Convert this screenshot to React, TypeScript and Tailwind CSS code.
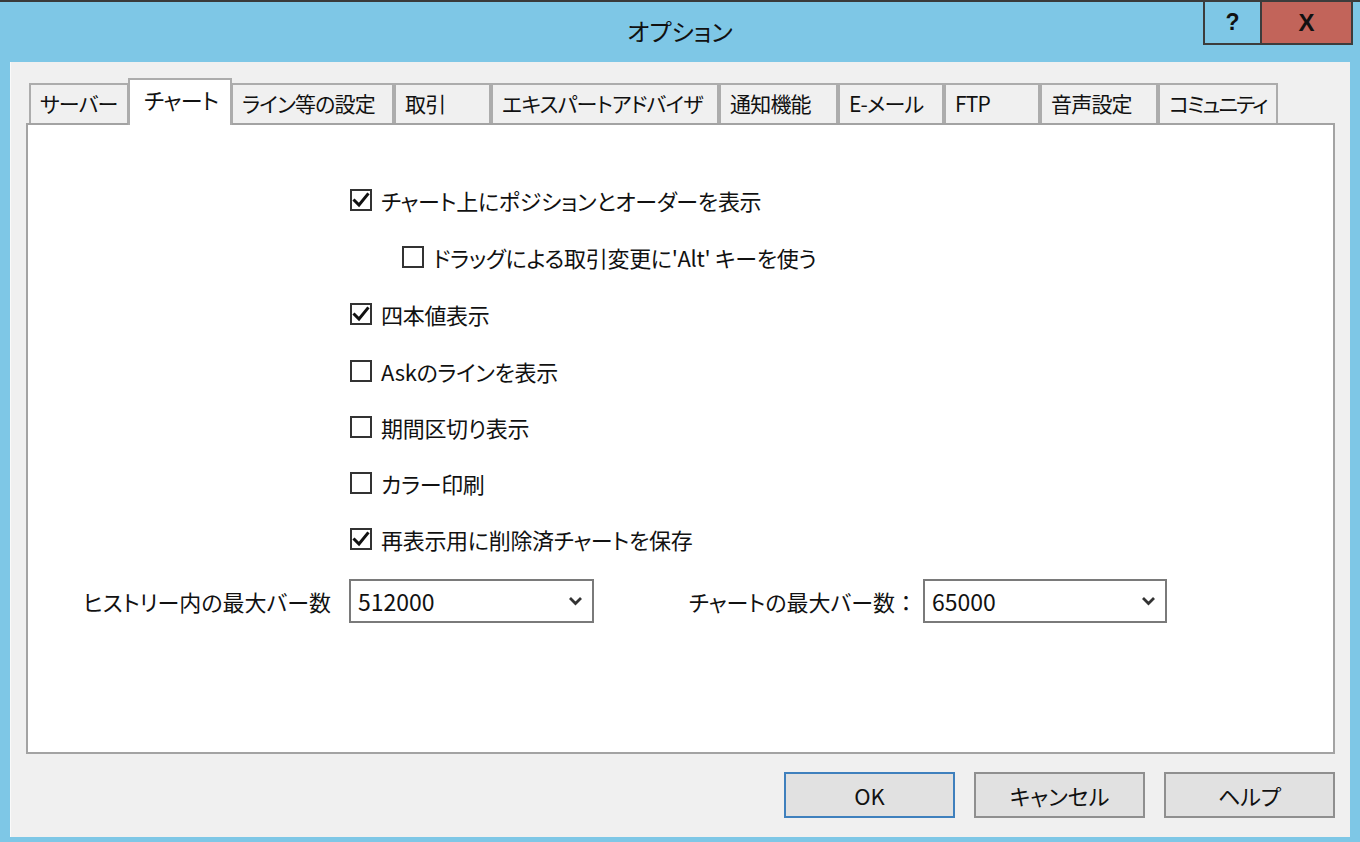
import React from "react";

const FONT = "font-['Noto_Sans_CJK_JP','Noto_Sans',sans-serif] [font-feature-settings:'palt']";

const tabs: { label: string; w: string; selected?: boolean; tr?: string }[] = [
  { label: "サーバー", w: "w-[100px]" },
  { label: "チャート", w: "w-[104px]", selected: true },
  { label: "ライン等の設定", w: "w-[163px]" },
  { label: "取引", w: "w-[97px]" },
  { label: "エキスパートアドバイザ", w: "w-[228px]" },
  { label: "通知機能", w: "w-[119px]" },
  { label: "E-メール", w: "w-[106px]" },
  { label: "FTP", w: "w-[96px]" },
  { label: "音声設定", w: "w-[118px]" },
  { label: "コミュニティ", w: "w-[120px]", tr: "tracking-[-1.8px]" },
];

function Check({ checked }: { checked: boolean }) {
  return (
    <div className="w-[22px] h-[22px] border-2 border-[#333333] bg-white flex items-center justify-center shrink-0">
      {checked && (
        <svg width="18" height="18" viewBox="0 0 18 18">
          <path d="M2.5 9.5 L7 14 L15.5 3.5" fill="none" stroke="#111" strokeWidth="3" strokeLinecap="square" />
        </svg>
      )}
    </div>
  );
}

function Row({ h, checked, label, indent }: { h: string; checked: boolean; label: string; indent?: boolean }) {
  return (
    <div className={`${h} flex items-center`}>
      <div className={`flex items-center gap-[9px] ${indent ? "ml-[374px]" : "ml-[322px]"}`}>
        <Check checked={checked} />
        <span className="text-[22px] text-[#111] leading-none whitespace-nowrap tracking-[-0.3px]">{label}</span>
      </div>
    </div>
  );
}

function Chevron() {
  return (
    <svg width="15" height="10" viewBox="0 0 15 10">
      <path d="M2 2 L7.5 7.5 L13 2" fill="none" stroke="#333" strokeWidth="2.8" />
    </svg>
  );
}

function Combo({ w, value }: { w: string; value: string }) {
  return (
    <div className={`${w} h-[44px] border-2 border-[#7a7a7a] bg-white flex items-center justify-between pl-[7px] pr-[9px]`}>
      <span className="text-[23px] text-[#111] leading-none">{value}</span>
      <Chevron />
    </div>
  );
}

export default function App() {
  return (
    <div className={`w-[1360px] h-[842px] bg-[#7ec7e6] flex flex-col overflow-hidden ${FONT}`}>
      <div className="h-[2px] bg-[#3a3a3a]" />
      <div className="h-[60px] relative flex items-center justify-center">
        <span className="text-[24px] text-[#111] mt-[-2px]">オプション</span>
        <div className="absolute top-[-2px] right-[7px] flex h-[45px]">
          <div className="w-[57px] border-2 border-r-0 border-[#3c3c3c] bg-[#7ec7e6] flex items-center justify-center">
            <span className="text-[23px] font-bold text-[#111] font-['Liberation_Sans',sans-serif]">?</span>
          </div>
          <div className="w-[93px] border-2 border-[#3c3c3c] bg-[#c2645a] flex items-center justify-center">
            <span className="text-[24px] font-bold text-[#111] font-['Liberation_Sans',sans-serif]">X</span>
          </div>
        </div>
      </div>
      <div className="mx-[10px] h-[775px] bg-[#f0f0f0] border-l border-[#fafafa] px-[15px] pt-[16px] flex flex-col">
        <div className="h-[45px] flex items-end ml-[3px] relative z-10">
          {tabs.map((t) =>
            t.selected ? (
              <div
                key={t.label}
                className={`${t.w} h-[47px] -mb-[2px] -mx-[1px] bg-white border-2 border-b-0 border-[#acacac] flex items-center pl-[14px] pb-[8px] shrink-0`}
              >
                <span className="text-[22px] text-[#111] leading-none whitespace-nowrap tracking-[-0.5px]">{t.label}</span>
              </div>
            ) : (
              <div
                key={t.label}
                className={`${t.w} h-[40px] bg-[#f0f0f0] border-2 border-b-0 border-[#acacac] flex items-center pl-[9px] pb-[2px] shrink-0 overflow-hidden`}
              >
                <span className={`text-[21px] text-[#111] leading-none whitespace-nowrap ${t.tr ?? "tracking-[-0.8px]"}`}>{t.label}</span>
              </div>
            )
          )}
        </div>
        <div className="h-[631px] border-2 border-[#a3a3a3] bg-white pt-[47px] flex flex-col">
          <Row h="h-[56px]" checked label="チャート上にポジションとオーダーを表示" />
          <Row h="h-[57px]" checked={false} indent label="ドラッグによる取引変更に'Alt' キーを使う" />
          <Row h="h-[57px]" checked label="四本値表示" />
          <Row h="h-[57px]" checked={false} label="Askのラインを表示" />
          <Row h="h-[56px]" checked={false} label="期間区切り表示" />
          <Row h="h-[56px]" checked={false} label="カラー印刷" />
          <Row h="h-[56px]" checked label="再表示用に削除済チャートを保存" />
          <div className="mt-[12px] flex items-center">
            <div className="w-[321px] pr-[18px] flex justify-end">
              <span className="text-[22px] text-[#111] leading-none whitespace-nowrap">ヒストリー内の最大バー数</span>
            </div>
            <Combo w="w-[245px]" value="512000" />
            <div className="w-[329px] pr-[6px] flex justify-end">
              <span className="text-[22px] text-[#111] leading-none whitespace-nowrap">
                チャートの最大バー数<span className="[font-feature-settings:normal]">：</span>
              </span>
            </div>
            <Combo w="w-[244px]" value="65000" />
          </div>
        </div>
        <div className="mt-[18px] flex justify-end gap-[19px]">
          <div className="w-[171px] h-[46px] border-2 border-[#3f80bd] bg-[#e1e1e1] flex items-center justify-center">
            <span className="text-[22px] text-[#111] leading-none">OK</span>
          </div>
          <div className="w-[171px] h-[46px] border-2 border-[#8f8f8f] bg-[#e1e1e1] flex items-center justify-center">
            <span className="text-[22px] text-[#111] leading-none">キャンセル</span>
          </div>
          <div className="w-[171px] h-[46px] border-2 border-[#8f8f8f] bg-[#e1e1e1] flex items-center justify-center">
            <span className="text-[22px] text-[#111] leading-none">ヘルプ</span>
          </div>
        </div>
      </div>
    </div>
  );
}
